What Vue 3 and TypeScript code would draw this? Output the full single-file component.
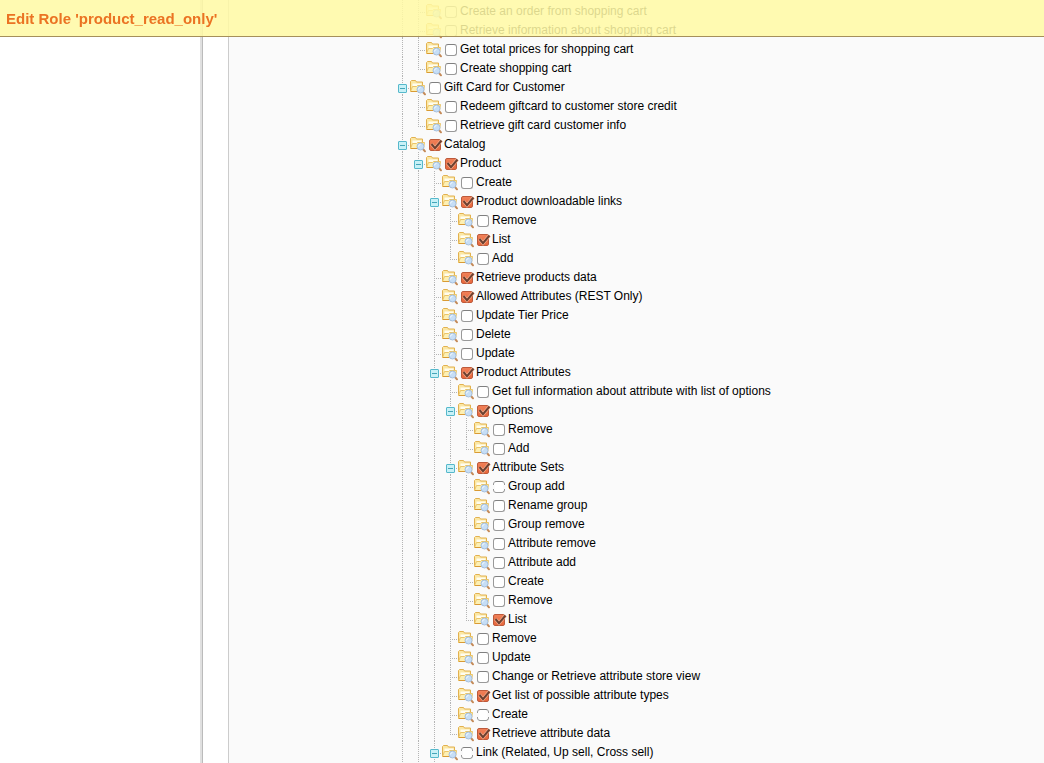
<script setup lang="ts">
import { computed, ref } from 'vue'

type Box = 'off' | 'on' | 'faint'
interface Resource {
  depth: number
  name: string
  checked: boolean
  faint: boolean
  branch: boolean
}

const item = (depth: number, name: string, box: Box = 'off', branch = false): Resource => ({
  depth,
  name,
  checked: box === 'on',
  faint: box === 'faint',
  branch,
})

const resources = ref<Resource[]>([
  item(1, 'Create an order from shopping cart'),
  item(1, 'Retrieve information about shopping cart'),
  item(1, 'Get total prices for shopping cart'),
  item(1, 'Create shopping cart'),
  item(0, 'Gift Card for Customer', 'off', true),
  item(1, 'Redeem giftcard to customer store credit'),
  item(1, 'Retrieve gift card customer info'),
  item(0, 'Catalog', 'on', true),
  item(1, 'Product', 'on', true),
  item(2, 'Create'),
  item(2, 'Product downloadable links', 'on', true),
  item(3, 'Remove'),
  item(3, 'List', 'on'),
  item(3, 'Add'),
  item(2, 'Retrieve products data', 'on'),
  item(2, 'Allowed Attributes (REST Only)', 'on'),
  item(2, 'Update Tier Price'),
  item(2, 'Delete'),
  item(2, 'Update'),
  item(2, 'Product Attributes', 'on', true),
  item(3, 'Get full information about attribute with list of options'),
  item(3, 'Options', 'on', true),
  item(4, 'Remove'),
  item(4, 'Add'),
  item(3, 'Attribute Sets', 'on', true),
  item(4, 'Group add', 'faint'),
  item(4, 'Rename group'),
  item(4, 'Group remove'),
  item(4, 'Attribute remove'),
  item(4, 'Attribute add'),
  item(4, 'Create'),
  item(4, 'Remove'),
  item(4, 'List', 'on'),
  item(3, 'Remove'),
  item(3, 'Update'),
  item(3, 'Change or Retrieve attribute store view'),
  item(3, 'Get list of possible attribute types', 'on'),
  item(3, 'Create', 'faint'),
  item(3, 'Retrieve attribute data', 'on'),
  item(2, 'Link (Related, Up sell, Cross sell)', 'faint', true),
])

// Levels that still have siblings after the last loaded row.
const openLevels = [0, 1, 2]

function continues(index: number, level: number): boolean {
  const next = resources.value.slice(index + 1).find((r) => r.depth <= level)
  return next ? next.depth === level : openLevels.includes(level)
}

const rows = computed(() =>
  resources.value.map((resource, index) => ({
    resource,
    id: `resource-${index}`,
    guides: Array.from({ length: resource.depth + 1 }, (_, level) => ({
      line: continues(index, level),
      own: level === resource.depth,
    })),
  })),
)
</script>

<template>
  <div class="page">
    <header class="bar">
      <h1>Edit Role 'product_read_only'</h1>
    </header>
    <aside class="side"></aside>
    <main class="content">
      <ul class="tree">
        <li v-for="row in rows" :key="row.id" class="row">
          <span
            v-for="(guide, level) in row.guides"
            :key="level"
            class="guide"
            :class="{ line: guide.line, elbow: guide.own, last: guide.own && !guide.line }"
          >
            <button v-if="guide.own && row.resource.branch" type="button" class="toggle" :aria-label="`Collapse ${row.resource.name}`"></button>
          </span>
          <svg class="folder" viewBox="0 0 17 18" aria-hidden="true">
            <path d="M.5 12.500V2.500l1-1h4l1 1.500h6v9.500z" fill="#fbe7a4" stroke="#e2b14f" />
            <path d="M2.500 4.500h9v3h-9z" fill="#fffdf0" />
            <path d="M.5 12.500l2-5h4l1-1h7l-1 6z" fill="#fdf0b4" stroke="#eac468" />
            <path d="M1 12.500h8" stroke="#d99a35" />
            <path d="M13 13l2 2.300" stroke="#c48a58" stroke-width="2" stroke-linecap="round" />
            <circle cx="10.500" cy="10.500" r="3.500" fill="#c6def6" stroke="#a6bfdc" />
            <path d="M8.500 10.500a2 2 0 0 1 2-2" fill="none" stroke="#f2f9ff" />
          </svg>
          <span class="box">
            <input :id="row.id" v-model="row.resource.checked" type="checkbox" :class="{ faint: row.resource.faint }" />
            <svg v-if="row.resource.checked" class="tick" viewBox="0 0 14 13" aria-hidden="true">
              <path d="M2.500 5l3.500 4.200 6.500-7.700" fill="none" stroke="#f7b495" stroke-width="3.400" />
              <path d="M2.500 5l3.500 4.200 6.500-7.700" fill="none" stroke="#6e4030" stroke-width="2" />
            </svg>
          </span>
          <label :for="row.id">{{ row.resource.name }}</label>
        </li>
      </ul>
    </main>
  </div>
</template>

<style>
body {
  background: #fff;
  overflow: hidden;
}
</style>

<style scoped>
.page {
  display: flex;
  height: 100vh;
  overflow: hidden;
  font-family: "Liberation Sans", Arial, sans-serif;
  font-size: 12px;
  color: #000;
}
.bar {
  position: fixed;
  inset: 0 0 auto;
  z-index: 2;
  box-sizing: border-box;
  height: 37px;
  padding: 0 6px;
  border-bottom: 1px solid #a58f5b;
  background: rgba(255, 249, 164, 0.86);
}
h1 {
  margin: 0;
  font-size: 15px;
  line-height: 37px;
  color: #eb7323;
}
.side {
  flex: 0 0 200px;
  border-right: 1px solid #bbb;
  box-shadow: inset -2px 0 #e0e0e0;
  padding-right: 2px;
}
.content {
  flex: 1;
  margin-left: 25px;
  border-left: 1px solid #ccc;
  background: #fafafa;
}
.tree {
  margin: 0;
  padding: 0 0 0 165px;
  list-style: none;
}
.row {
  display: flex;
  height: 19px;
}
.guide {
  display: grid;
  flex: 0 0 16px;
  grid-template: 19px / 16px;
}
.guide::before,
.guide::after {
  content: "";
  grid-area: 1 / 1;
}
.line::before,
.elbow::before {
  width: 1px;
  height: 19px;
  margin-left: 8px;
  background: repeating-linear-gradient(#b4b4b4 0 1px, transparent 1px 2px);
}
.last::before {
  height: 13px;
}
.row:last-child .line::before {
  height: 24px;
}
.elbow::after {
  height: 1px;
  margin: 12px 0 0 8px;
  background: repeating-linear-gradient(90deg, #b4b4b4 0 1px, transparent 1px 2px);
}
.toggle {
  z-index: 1;
  grid-area: 1 / 1;
  width: 9px;
  height: 9px;
  margin: 8px 0 0 4px;
  padding: 0;
  border: 1px solid #55b8cb;
  border-radius: 1px;
  background: linear-gradient(#45a5b8, #45a5b8) center / 5px 1px no-repeat, #c8f1f7;
}
.folder {
  flex: none;
  width: 17px;
  height: 18px;
  margin-top: 3px;
}
.box {
  position: relative;
  flex: 0 0 12px;
  height: 12px;
  margin: 6px 3px 0 2px;
}
input {
  appearance: none;
  display: block;
  box-sizing: border-box;
  width: 12px;
  height: 12px;
  margin: 0;
  border: 1px solid #999;
  border-top-color: #808080;
  border-radius: 3px;
  background: #fff;
}
input:checked {
  border-color: #bd5a3b;
  border-radius: 2px;
  background: linear-gradient(#f08058, #e8683d);
}
.faint:not(:checked) {
  mask:
    linear-gradient(#000 0 0) center / 8px 100% no-repeat,
    linear-gradient(#000 0 0) top / 100% 4px no-repeat,
    linear-gradient(#000 0 0) bottom / 100% 4px no-repeat;
}
.tick {
  position: absolute;
  top: 0;
  left: 0;
  width: 14px;
  height: 13px;
}
label {
  line-height: 22px;
  white-space: nowrap;
}
</style>
